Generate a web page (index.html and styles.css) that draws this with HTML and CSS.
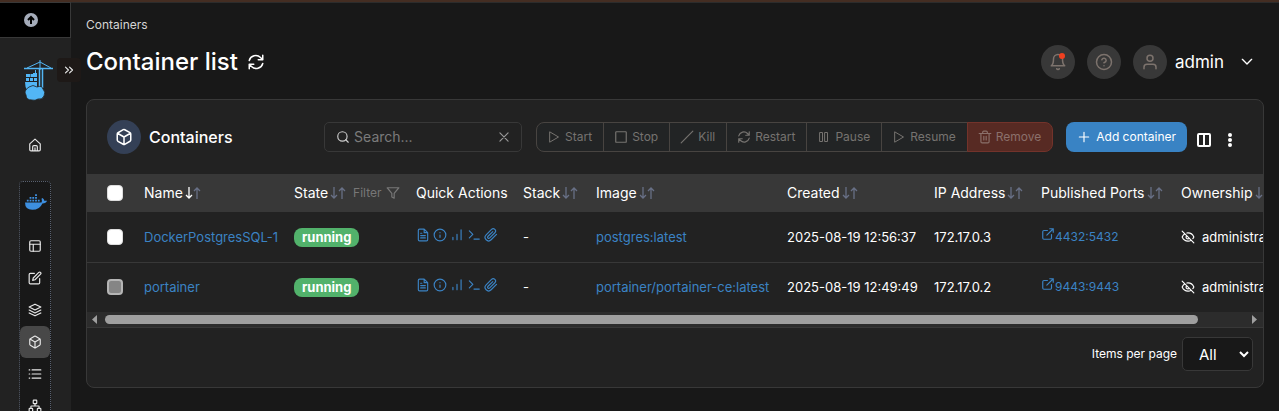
FILE: index.html
```html
<!DOCTYPE html>
<html lang="en">
<head>
<meta charset="utf-8">
<meta name="viewport" content="width=device-width, initial-scale=1">
<title>Container list</title>
<link rel="stylesheet" href="styles.css">
</head>
<body>
<svg class="sprite" aria-hidden="true">
  <symbol id="refresh" viewBox="0 0 24 24"><path d="M21 3v6h-6M3 21v-6h6M3 10a9 9 0 0 1 15-4l3 3M21 14a9 9 0 0 1-15 4l-3-3"/></symbol>
  <symbol id="home" viewBox="0 0 24 24"><path d="M3 10l9-8 9 8v10a2 2 0 0 1-2 2H5a2 2 0 0 1-2-2zM8 22v-7a2 2 0 0 1 2-2h4a2 2 0 0 1 2 2v7M12 22v-5"/></symbol>
  <symbol id="layout" viewBox="0 0 24 24"><rect x="3" y="3" width="18" height="18" rx="2"/><path d="M3 9h18M9 21V9"/></symbol>
  <symbol id="edit" viewBox="0 0 24 24"><path d="M11 4H4a2 2 0 0 0-2 2v14a2 2 0 0 0 2 2h14a2 2 0 0 0 2-2v-7M18.500 2.500a2.120 2.120 0 0 1 3 3L12 15l-4 1 1-4z"/></symbol>
  <symbol id="layers" viewBox="0 0 24 24"><path d="M12 2L2 7l10 5 10-5zM2 12l10 5 10-5M2 17l10 5 10-5"/></symbol>
  <symbol id="box" viewBox="0 0 24 24"><path d="M21 16V8a2 2 0 0 0-1-1.700l-7-4a2 2 0 0 0-2 0l-7 4A2 2 0 0 0 3 8v8a2 2 0 0 0 1 1.700l7 4a2 2 0 0 0 2 0l7-4a2 2 0 0 0 1-1.700zM3.300 7L12 12l8.700-5M12 22V12"/></symbol>
  <symbol id="list" viewBox="0 0 24 24"><path d="M7 5h15M7 12h15M7 19h15M2 5h1M2 12h1M2 19h1"/></symbol>
  <symbol id="network" viewBox="0 0 24 24"><rect x="9" y="2" width="6" height="6" rx="1"/><rect x="2" y="16" width="6" height="6" rx="1"/><rect x="16" y="16" width="6" height="6" rx="1"/><path d="M5 16v-3a1 1 0 0 1 1-1h12a1 1 0 0 1 1 1v3M12 12V8"/></symbol>
  <symbol id="chevrons" viewBox="0 0 24 24"><path d="M6 17l5-5-5-5M13 17l5-5-5-5"/></symbol>
  <symbol id="bell" viewBox="0 0 24 24"><path d="M18 8A6 6 0 0 0 6 8c0 7-3 9-3 9h18s-3-2-3-9M10.300 21a2 2 0 0 0 3.400 0"/></symbol>
  <symbol id="help" viewBox="0 0 24 24"><circle cx="12" cy="12" r="10"/><path d="M9.100 9a3 3 0 0 1 5.800 1c0 2-2.900 3-2.900 3M12 17h.01"/></symbol>
  <symbol id="user" viewBox="0 0 24 24"><path d="M20 21v-2a4 4 0 0 0-4-4H8a4 4 0 0 0-4 4v2"/><circle cx="12" cy="7" r="4"/></symbol>
  <symbol id="down" viewBox="0 0 24 24"><path d="M5 8l7 7 7-7"/></symbol>
  <symbol id="search" viewBox="0 0 24 24"><circle cx="11" cy="11" r="8"/><path d="M21 21l-4.300-4.300"/></symbol>
  <symbol id="x" viewBox="0 0 24 24"><path d="M5 5l14 14M19 5L5 19"/></symbol>
  <symbol id="play" viewBox="0 0 24 24"><path d="M4 2l17 10L4 22z"/></symbol>
  <symbol id="stop" viewBox="0 0 24 24"><rect x="3" y="3" width="18" height="18" rx="1"/></symbol>
  <symbol id="slash" viewBox="0 0 24 24"><path d="M2 22L22 2"/></symbol>
  <symbol id="pause" viewBox="0 0 24 24"><rect x="4" y="3" width="5" height="18"/><rect x="14" y="3" width="5" height="18"/></symbol>
  <symbol id="trash" viewBox="0 0 24 24"><path d="M2 6h20M19 6v14a2 2 0 0 1-2 2H7a2 2 0 0 1-2-2V6M8 6V4a2 2 0 0 1 2-2h4a2 2 0 0 1 2 2v2M10 11v6M14 11v6"/></symbol>
  <symbol id="plus" viewBox="0 0 24 24"><path d="M12 4v16M4 12h16"/></symbol>
  <symbol id="columns" viewBox="0 0 14 14"><rect x="1" y="1" width="12" height="12" rx="1"/><path d="M7 1v12"/></symbol>
  <symbol id="kebab" viewBox="0 0 6 14"><circle cx="3" cy="2" r="2"/><circle cx="3" cy="7" r="2"/><circle cx="3" cy="12" r="2"/></symbol>
  <symbol id="filter" viewBox="0 0 24 24"><path d="M22 3H2l8 9.500V19l4 2v-8.500z"/></symbol>
  <symbol id="arrow-down" viewBox="0 0 8 14"><path d="M4 1v11M1 9l3 3 3-3"/></symbol>
  <symbol id="arrow-up" viewBox="0 0 8 14"><path d="M4 13V2M1 5l3-3 3 3"/></symbol>
  <symbol id="file" viewBox="0 0 24 24"><path d="M14 2H6a2 2 0 0 0-2 2v16a2 2 0 0 0 2 2h12a2 2 0 0 0 2-2V8zM14 2v6h6M16 13H8M16 17H8M10 9H8"/></symbol>
  <symbol id="info" viewBox="0 0 24 24"><circle cx="12" cy="12" r="10"/><path d="M12 16v-4M12 8h.01"/></symbol>
  <symbol id="bars" viewBox="0 0 24 24"><path d="M19 20V3M12 20v-9M5 20v-4"/></symbol>
  <symbol id="terminal" viewBox="0 0 24 24"><path d="M4 17l6-6-6-6M12 19h9"/></symbol>
  <symbol id="clip" viewBox="0 0 24 24"><path d="M21.400 11l-9.200 9.200a6 6 0 0 1-8.500-8.500l9.200-9.200a4 4 0 0 1 5.700 5.700l-9.200 9.200a2 2 0 0 1-2.800-2.800l8.500-8.500"/></symbol>
  <symbol id="external" viewBox="0 0 24 24"><path d="M18 13v6a2 2 0 0 1-2 2H5a2 2 0 0 1-2-2V8a2 2 0 0 1 2-2h6M15 3h6v6M10 14L21 3"/></symbol>
  <symbol id="eye-off" viewBox="0 0 24 24"><path d="M10 5.200A10 10 0 0 1 12 5c7 0 10 7 10 7a13 13 0 0 1-1.700 2.700M6.600 6.600A13.500 13.500 0 0 0 2 12s3 7 10 7a9.700 9.700 0 0 0 5.400-1.600M2 2l20 20M9.900 9.900a3 3 0 1 0 4.200 4.200"/></symbol>
</svg>

<div class="app">
  <aside class="sidebar">
    <button class="update" aria-label="Update">
      <svg width="14" height="14" viewBox="0 0 14 14"><circle cx="7" cy="7" r="7" fill="#a5acba"/><path d="M7 11V4M4 7l3-3 3 3" fill="none" stroke="#000" stroke-width="2"/></svg>
    </button>
    <div class="brand">
      <svg class="crane" width="30" height="42" viewBox="0 0 30 42">
        <g fill="none" stroke="#52b6f5"><path d="M0 8.500h29" stroke-width="1.500"/><path d="M3 8L16 2l11 6M16 0v10"/><path d="M15.500 8v19M18.500 8v20" stroke-width="1.500"/><path d="M11.500 10v5"/></g>
        <g fill="#52b6f5"><path d="M2 14h4v3H2zM6.500 14h3v3h-3zM2 18h3v3H2zM6 18h3v3H6zM10 18h3v3h-3zM9 13h4v4H9zM1 22h12v5l-4 3H3q-2-3-2-8z"/><path d="M5 27q4-3 8 0 5-2 6 2 3 3 1 7-2 4-6 3-3 2-6 1-6 0-6-5-3-4 3-8z" stroke="#222" stroke-width=".8"/></g>
      </svg>
      <button class="expand" aria-label="Expand sidebar"><svg class="icon"><use href="#chevrons"/></svg></button>
    </div>
    <nav class="nav">
      <a class="nav-link home" href="#" aria-label="Home"><svg class="icon"><use href="#home"/></svg></a>
      <div class="environment">
        <a class="docker" href="#" aria-label="Docker environment">
          <svg width="22" height="17" viewBox="0 0 24 18"><path fill="#3d8fe0" d="M0 9h18q1-1 0-4l1-1q2 1 2 3h3q-1 3-5 3-3 7-11 7Q0 17 0 9zM2 6h2v2H2zM5 6h2v2H5zM8 6h2v2H8zM11 6h2v2h-2zM14 6h2v2h-2zM5 3h2v2H5zM8 3h2v2H8zM11 3h2v2h-2zM11 0h2v2h-2z"/></svg>
        </a>
        <a class="nav-link" href="#" aria-label="Dashboard"><svg class="icon"><use href="#layout"/></svg></a>
        <a class="nav-link" href="#" aria-label="Templates"><svg class="icon"><use href="#edit"/></svg></a>
        <a class="nav-link" href="#" aria-label="Stacks"><svg class="icon"><use href="#layers"/></svg></a>
        <a class="nav-link active" href="#" aria-label="Containers"><svg class="icon"><use href="#box"/></svg></a>
        <a class="nav-link" href="#" aria-label="Images"><svg class="icon"><use href="#list"/></svg></a>
        <a class="nav-link" href="#" aria-label="Networks"><svg class="icon"><use href="#network"/></svg></a>
      </div>
    </nav>
  </aside>

  <main class="main">
    <div class="breadcrumb">Containers</div>
    <header class="page-head">
      <h1 class="title">Container list</h1>
      <button class="reload" aria-label="Refresh"><svg class="icon large"><use href="#refresh"/></svg></button>
      <div class="account">
        <button class="round" aria-label="Notifications"><svg class="icon large"><use href="#bell"/></svg><span class="dot"></span></button>
        <button class="round" aria-label="Help"><svg class="icon large"><use href="#help"/></svg></button>
        <button class="user"><span class="round"><svg class="icon large"><use href="#user"/></svg></span><span class="user-name">admin</span><svg class="icon caret"><use href="#down"/></svg></button>
      </div>
    </header>

    <section class="card">
      <div class="toolbar">
        <span class="card-icon"><svg class="icon large"><use href="#box"/></svg></span>
        <h2 class="card-title">Containers</h2>
        <div class="search">
          <svg class="icon"><use href="#search"/></svg>
          <input type="text" placeholder="Search..." aria-label="Search">
          <button class="clear" aria-label="Clear search"><svg class="icon"><use href="#x"/></svg></button>
        </div>
        <div class="actions">
          <button class="action" disabled><svg class="icon small"><use href="#play"/></svg>Start</button>
          <button class="action" disabled><svg class="icon"><use href="#stop"/></svg>Stop</button>
          <button class="action" disabled><svg class="icon"><use href="#slash"/></svg>Kill</button>
          <button class="action" disabled><svg class="icon"><use href="#refresh"/></svg>Restart</button>
          <button class="action" disabled><svg class="icon small"><use href="#pause"/></svg>Pause</button>
          <button class="action" disabled><svg class="icon small"><use href="#play"/></svg>Resume</button>
          <button class="action danger" disabled><svg class="icon"><use href="#trash"/></svg>Remove</button>
        </div>
        <button class="add"><svg class="icon"><use href="#plus"/></svg>Add container</button>
        <button class="tool" aria-label="Columns"><svg class="columns-icon"><use href="#columns"/></svg></button>
        <button class="tool" aria-label="Table settings"><svg class="kebab-icon"><use href="#kebab"/></svg></button>
      </div>

      <div class="table-scroll">
        <table class="table">
          <colgroup><col class="c-check"><col class="c-name"><col class="c-state"><col class="c-quick"><col class="c-stack"><col class="c-image"><col class="c-created"><col class="c-ip"><col class="c-ports"><col class="c-owner"></colgroup>
          <thead>
            <tr>
              <th><input class="check" type="checkbox" aria-label="Select all"></th>
              <th><span class="head">Name<span class="sort sorted"><svg><use href="#arrow-down"/></svg><svg><use href="#arrow-up"/></svg></span></span></th>
              <th><span class="head">State<span class="sort"><svg><use href="#arrow-down"/></svg><svg><use href="#arrow-up"/></svg></span><button class="filter">Filter<svg class="icon"><use href="#filter"/></svg></button></span></th>
              <th>Quick Actions</th>
              <th><span class="head">Stack<span class="sort"><svg><use href="#arrow-down"/></svg><svg><use href="#arrow-up"/></svg></span></span></th>
              <th><span class="head">Image<span class="sort"><svg><use href="#arrow-down"/></svg><svg><use href="#arrow-up"/></svg></span></span></th>
              <th><span class="head">Created<span class="sort"><svg><use href="#arrow-down"/></svg><svg><use href="#arrow-up"/></svg></span></span></th>
              <th><span class="head">IP Address<span class="sort"><svg><use href="#arrow-down"/></svg><svg><use href="#arrow-up"/></svg></span></span></th>
              <th><span class="head">Published Ports<span class="sort"><svg><use href="#arrow-down"/></svg><svg><use href="#arrow-up"/></svg></span></span></th>
              <th><span class="head">Ownership<span class="sort"><svg><use href="#arrow-down"/></svg><svg><use href="#arrow-up"/></svg></span></span></th>
            </tr>
          </thead>
          <tbody>
            <tr>
              <td><input class="check" type="checkbox" aria-label="Select DockerPostgresSQL-1"></td>
              <td><a href="#">DockerPostgresSQL-1</a></td>
              <td><span class="badge">running</span></td>
              <td><span class="quick"><a href="#" aria-label="Logs"><svg class="icon"><use href="#file"/></svg></a><a href="#" aria-label="Inspect"><svg class="icon"><use href="#info"/></svg></a><a href="#" aria-label="Stats"><svg class="icon"><use href="#bars"/></svg></a><a href="#" aria-label="Console"><svg class="icon"><use href="#terminal"/></svg></a><a href="#" aria-label="Attach"><svg class="icon"><use href="#clip"/></svg></a></span></td>
              <td>-</td>
              <td><a href="#">postgres:latest</a></td>
              <td>2025-08-19 12:56:37</td>
              <td>172.17.0.3</td>
              <td><a class="port" href="#"><svg class="icon"><use href="#external"/></svg>4432:5432</a></td>
              <td><span class="owner"><svg class="icon"><use href="#eye-off"/></svg>administrators</span></td>
            </tr>
            <tr>
              <td><input class="check" type="checkbox" aria-label="Select portainer" disabled></td>
              <td><a href="#">portainer</a></td>
              <td><span class="badge">running</span></td>
              <td><span class="quick"><a href="#" aria-label="Logs"><svg class="icon"><use href="#file"/></svg></a><a href="#" aria-label="Inspect"><svg class="icon"><use href="#info"/></svg></a><a href="#" aria-label="Stats"><svg class="icon"><use href="#bars"/></svg></a><a href="#" aria-label="Console"><svg class="icon"><use href="#terminal"/></svg></a><a href="#" aria-label="Attach"><svg class="icon"><use href="#clip"/></svg></a></span></td>
              <td>-</td>
              <td><a href="#">portainer/portainer-ce:latest</a></td>
              <td>2025-08-19 12:49:49</td>
              <td>172.17.0.2</td>
              <td><a class="port" href="#"><svg class="icon"><use href="#external"/></svg>9443:9443</a></td>
              <td><span class="owner"><svg class="icon"><use href="#eye-off"/></svg>administrators</span></td>
            </tr>
          </tbody>
        </table>
      </div>
      <div class="scrollbar" aria-hidden="true">
        <svg width="5" height="9" viewBox="0 0 5 9"><path d="M5 0v9L0 4.500z"/></svg>
        <div class="track"><div class="thumb"></div></div>
        <svg width="5" height="9" viewBox="0 0 5 9"><path d="M0 0v9l5-4.500z"/></svg>
      </div>
      <footer class="card-foot">
        <label for="per-page">Items per page</label>
        <select id="per-page" class="per-page"><option>All</option><option>10</option><option>25</option><option>50</option><option>100</option></select>
      </footer>
    </section>
  </main>
</div>
</body>
</html>
```
FILE: styles.css
```css
* { box-sizing: border-box; }

body {
  margin: 0;
  background: #181818;
  color: #fff;
  font: 13px/20px Inter, "Liberation Sans", sans-serif;
}

a { color: #3b83c4; text-decoration: none; }

button {
  margin: 0;
  padding: 0;
  border: 0;
  background: none;
  color: inherit;
  font: inherit;
}

.sprite { position: absolute; width: 0; height: 0; }

.icon {
  width: 14px;
  height: 14px;
  flex: none;
  fill: none;
  stroke: currentColor;
  stroke-width: 2;
  stroke-linecap: round;
  stroke-linejoin: round;
}
.icon.small { width: 12px; height: 12px; }
.icon.large { width: 18px; height: 18px; }
.icon.caret { width: 16px; height: 16px; }

.app {
  display: flex;
  height: 100vh;
  overflow: hidden;
  border-top: 2px solid #442d22;
}

/* Sidebar */
.sidebar {
  flex: none;
  width: 71px;
  background: #222;
  color: #e8e8e8;
}
.update {
  display: flex;
  align-items: center;
  width: 100%;
  height: 36px;
  padding-left: 24px;
  border: 1px solid #383838;
  border-left: 0;
  background: #000;
}
.brand {
  display: flex;
  position: relative;
  padding: 22px 0 0 24px;
}
.expand {
  display: grid;
  place-items: center;
  position: absolute;
  top: 20px;
  left: 57px;
  width: 24px;
  height: 24px;
  border-radius: 4px;
  background: #1e1917;
}
.nav {
  display: flex;
  flex-direction: column;
  align-items: center;
  padding: 27px 2px 0 0;
}
.nav-link {
  display: grid;
  place-items: center;
  width: 30px;
  height: 32px;
  border-radius: 6px;
  color: #e8e8e8;
}
.home { margin-bottom: 20px; }
.environment {
  width: 32px;
  border: 1px dotted #596170;
  border-radius: 4px;
  background: #181818;
}
.docker {
  display: grid;
  place-items: center;
  height: 48px;
  padding: 0 0 8px 2px;
}
.active { background: #484848; }

/* Page header */
.main {
  flex: 1;
  min-width: 0;
  padding: 12px 15px;
  border-top: 1px solid #2c2c2c;
}
.breadcrumb { color: #d5d5d5; font-size: 12px; }
.page-head {
  display: flex;
  align-items: center;
  height: 34px;
  margin: 10px 0 20px;
}
.title {
  margin: 0;
  font-size: 24px;
  font-weight: 500;
  line-height: 32px;
}
.reload { display: flex; margin-left: 9px; }
.account {
  display: flex;
  gap: 12px;
  margin-left: auto;
  padding-right: 9px;
}
.round {
  display: grid;
  place-items: center;
  position: relative;
  width: 34px;
  height: 34px;
  border-radius: 50%;
  background: #383838;
  color: #7d736d;
}
.dot {
  position: absolute;
  top: 8px;
  right: 10px;
  width: 6px;
  height: 6px;
  border-radius: 50%;
  background: #f04020;
}
.user { display: flex; align-items: center; }
.user-name { margin: 0 15px 0 8px; font-size: 17px; }

/* Card */
.card {
  overflow: hidden;
  border: 1px solid #383838;
  border-radius: 8px;
  background: #222;
}
.toolbar {
  display: flex;
  align-items: center;
  padding: 20px 30px 20px 20px;
}
.card-icon {
  display: grid;
  place-items: center;
  width: 34px;
  height: 34px;
  border-radius: 50%;
  background: #344056;
}
.card-title {
  margin: 0 auto 0 8px;
  font-size: 16px;
  font-weight: 500;
}
.search {
  display: flex;
  align-items: center;
  gap: 4px;
  width: 198px;
  height: 30px;
  padding: 0 10px 0 11px;
  border: 1px solid #383838;
  border-radius: 5px;
  color: #ccc;
}
.search input {
  flex: 1;
  min-width: 0;
  padding: 0;
  border: 0;
  outline: 0;
  background: none;
  color: #fff;
  font: inherit;
  font-size: 14px;
}
.search input::placeholder { color: #7b7b7b; }
.clear { display: flex; color: #999; }
.actions { display: flex; margin-left: 14px; }
.action {
  display: flex;
  align-items: center;
  gap: 5px;
  height: 30px;
  padding: 0 11px;
  border: 1px solid #484441;
  background: #222425;
  color: #767370;
  font-size: 12px;
}
.action + .action { margin-left: -1px; }
.action .icon:not(.small) { margin: 0 -1px; }
.action:first-child { border-radius: 8px 0 0 8px; }
.action:last-child { border-radius: 0 8px 8px 0; }
.action.danger {
  border-color: #73332b;
  background: #572a23;
  color: #8b706b;
}
.add {
  display: flex;
  align-items: center;
  gap: 5px;
  height: 30px;
  margin-left: 13px;
  padding: 0 11px;
  border-radius: 8px;
  background: #3983c4;
  font-size: 12px;
}
.tool { display: flex; margin: 5px 0 0 10px; }
.tool + .tool { margin-left: 16px; }
.columns-icon {
  width: 14px;
  height: 14px;
  fill: none;
  stroke: #fff;
  stroke-width: 2;
}
.kebab-icon { width: 6px; height: 14px; fill: #fff; }

/* Table */
.table-scroll { overflow-x: auto; scrollbar-width: none; }
.table {
  width: 100%;
  min-width: 1233px;
  border-collapse: collapse;
  table-layout: fixed;
}
.c-check { width: 49px; }
.c-name { width: 150px; }
.c-state { width: 122px; }
.c-quick { width: 107px; }
.c-stack { width: 73px; }
.c-image { width: 191px; }
.c-created { width: 147px; }
.c-ip { width: 107px; }
.c-ports { width: 140px; }
.table th, .table td {
  padding: 0 8px;
  text-align: left;
  white-space: nowrap;
}
.table th {
  height: 38px;
  background: #383838;
  font-size: 14px;
  font-weight: 400;
}
.table td { height: 50px; }
.table tbody tr + tr { border-top: 1px solid #383838; }
.table th:first-child, .table td:first-child { padding-left: 20px; }
.check {
  display: block;
  width: 16px;
  height: 16px;
  margin: 0;
  border: 1px solid #ddd;
  border-radius: 4px;
  background: #fff;
  appearance: none;
}
.check:disabled { border: 2px solid #b5b5b5; background: #858585; }
.head { display: flex; align-items: center; }
.sort { display: flex; margin-left: 2px; }
.sort svg {
  width: 8px;
  height: 14px;
  fill: none;
  stroke: #687086;
  stroke-width: 1.3;
}
.sorted svg:first-child { stroke: #fff; }
.filter {
  display: flex;
  align-items: center;
  gap: 4px;
  margin-left: 7px;
  color: #777;
  font-size: 12px;
}
.badge {
  display: inline-block;
  padding: 0 8px;
  border-radius: 8px;
  background: #52b26b;
  font-weight: 700;
  line-height: 19px;
}
.quick { display: flex; gap: 3px; padding-bottom: 4px; }
.quick a { display: flex; }
.port { display: flex; font-size: 12px; }
.owner { display: flex; align-items: center; gap: 7px; }

.scrollbar {
  display: flex;
  align-items: center;
  gap: 8px;
  height: 16px;
  padding: 0 6px 0 5px;
  border-bottom: 1px solid #383838;
  background: #2c2c2c;
}
.scrollbar svg { flex: none; fill: #9f9f9f; }
.track { flex: 1; }
.thumb {
  width: 96%;
  height: 9px;
  border-radius: 5px;
  background: #9f9f9f;
}

.card-foot {
  display: flex;
  align-items: center;
  justify-content: flex-end;
  gap: 5px;
  padding: 9px 10px 16px;
  font-size: 12px;
}
.per-page {
  width: 71px;
  height: 34px;
  padding: 0 0 0 12px;
  border: 1px solid #383838;
  border-radius: 5px;
  background: #181818;
  color: #fff;
  font: inherit;
  font-size: 15px;
}
```
